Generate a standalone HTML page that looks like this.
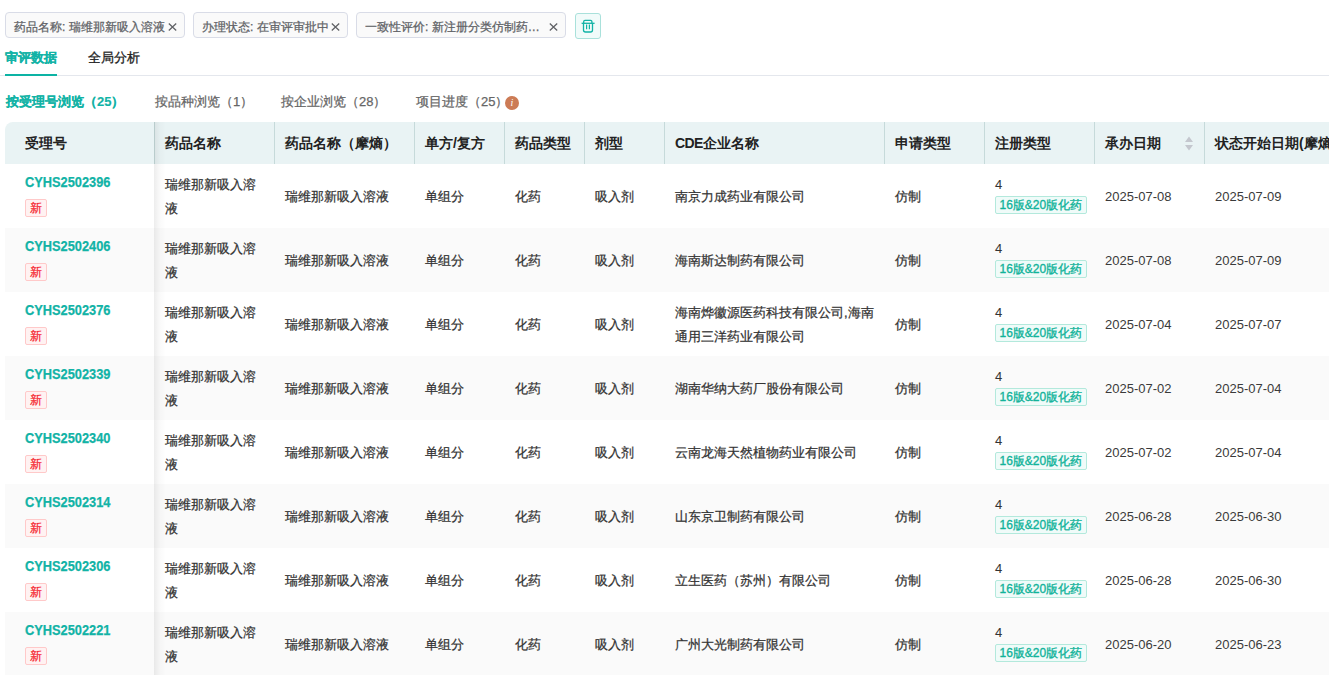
<!DOCTYPE html><html><head><meta charset="utf-8"><style>html,body{margin:0;padding:0;background:#fff;width:1329px;height:675px;overflow:hidden;position:relative;font-family:"Liberation Sans",sans-serif;}
*{box-sizing:border-box}
.tag{position:absolute;top:12px;height:26px;border:1px solid #d9dce7;border-radius:4px;background:#fafafa;color:#606266;font-size:12px;line-height:24px;padding:0 0 0 8px;white-space:nowrap}
.tag .tt{display:inline-block;vertical-align:top;position:relative;top:2px;letter-spacing:0px}
.tag .ell{width:176px;overflow:hidden;text-overflow:ellipsis}
.tag .x{position:absolute;right:7px;top:10px;width:9px;height:8px}
.trash{position:absolute;left:575px;top:13px;width:26px;height:26px;border:1px solid #a9e1db;border-radius:3px;background:#f1fbfa}
.trash svg{position:absolute;left:-1px;top:-1px}
.tabline{position:absolute;left:0;top:75px;width:1329px;height:1px;background:#e4e7ed}
.tab{position:absolute;top:48px;font-size:13px;line-height:20px;color:#222;-webkit-text-stroke:0.3px #222}
.tab.act{color:#12b3a6;font-weight:bold;-webkit-text-stroke:0.15px #12b3a6}
.tabul{position:absolute;left:5px;top:74px;width:52px;height:2px;background:#0cb3a4}
.sub{position:absolute;top:92px;font-size:13px;line-height:20px;color:#666;white-space:nowrap}
.sub.act{color:#12b3a6;font-weight:bold;-webkit-text-stroke:0.15px #12b3a6}
.info{position:absolute;left:505px;top:96px;width:14px;height:14px;border-radius:50%;background:#cc7b55;color:#fff;font-size:10px;line-height:14px;text-align:center;font-style:italic;font-weight:normal;font-family:"Liberation Serif",serif}
.thead{position:absolute;left:5px;top:122px;width:1324px;height:42px;background:#e9f3f4;border-radius:8px 0 0 0}
.th{position:absolute;top:122px;height:42px;line-height:42px;padding-left:11px;font-size:14px;font-weight:bold;color:#222;white-space:nowrap;overflow:hidden}
.thd{position:absolute;top:122px;width:1px;height:42px;background:#c6dada}
.sort{position:absolute;left:1184px;top:135px;width:10px;height:16px}
.row{position:absolute;left:5px;width:1324px;height:64px;background:#fff}
.row.st{background:#fafafa}
.td{position:absolute;top:1px;height:64px;display:flex;flex-direction:column;justify-content:center;padding-left:11px;font-size:13px;line-height:24px;color:#333;white-space:nowrap}
.no{color:#12b3a6;font-weight:bold;font-size:14px;line-height:16px;margin-top:-2px;position:relative;top:-2px;transform:scaleX(0.915);transform-origin:0 0}
.new{display:inline-block;width:22px;height:18px;margin-top:7px;border:1px solid #ffc9c9;background:#fff2f2;color:#f5222d;font-size:12px;line-height:17px;text-align:center;border-radius:2px;-webkit-text-stroke:0.2px #f5222d}
.c0{padding-left:20px;align-items:flex-start}
.four{line-height:16px;font-size:13px;position:relative;top:-2px}
.ver{display:inline-block;margin-top:2px;position:relative;top:-1px;height:18px;border:1px solid #b5e8e0;background:#f0fbf9;color:#12b39a;font-size:12px;line-height:17px;padding:0 3.5px;border-radius:2px;font-weight:500;-webkit-text-stroke:0.35px #12b39a;border-color:#b3e9dc}
.td:has(.ver){align-items:flex-start}
.fixshadow{position:absolute;left:154px;top:122px;width:12px;height:560px;background:linear-gradient(to right,rgba(0,0,0,0.07),rgba(0,0,0,0.02) 50%,rgba(0,0,0,0))}

.th.f{padding-left:20px}
.sub,.td,.tag .tt{-webkit-text-stroke:0.25px currentColor}
.td.date,.four{-webkit-text-stroke:0}
.td.date{color:#3a3a3a}
</style></head><body>
<div class="tag" style="left:5px;width:180px"><span class="tt">药品名称: 瑞维那新吸入溶液</span><svg class="x" viewBox="0 0 9 8"><path d="M0.8 0.6 L8.2 7.4 M8.2 0.6 L0.8 7.4" stroke="#606266" stroke-width="1.3"/></svg></div>
<div class="tag" style="left:193px;width:155px"><span class="tt">办理状态: 在审评审批中</span><svg class="x" viewBox="0 0 9 8"><path d="M0.8 0.6 L8.2 7.4 M8.2 0.6 L0.8 7.4" stroke="#606266" stroke-width="1.3"/></svg></div>
<div class="tag" style="left:356px;width:210px"><span class="tt ell">一致性评价: 新注册分类仿制药及按照新标准进行一致性评价</span><svg class="x" viewBox="0 0 9 8"><path d="M0.8 0.6 L8.2 7.4 M8.2 0.6 L0.8 7.4" stroke="#606266" stroke-width="1.3"/></svg></div>
<div class="trash"><svg width="26" height="26" viewBox="0 0 26 26"><g fill="none" stroke="#12b3a6" stroke-width="1.3"><path d="M8.7 10.3 V8.6 Q8.7 7.3 10 7.3 H15.6 Q16.9 7.3 16.9 8.6 V10.3"/><path d="M6.6 10.3 H19.6"/><path d="M8.5 10.3 V17 Q8.5 19 10.5 19 H15.5 Q17.5 19 17.5 17 V10.3"/><path d="M11.6 11.6 V16.3 M14.4 11.6 V16.3" stroke-width="1.2"/></g></svg></div>

<div class="tabline"></div>
<div class="tab act" style="left:5px">审评数据</div><div class="tabul"></div>
<div class="tab" style="left:88px">全局分析</div>

<div class="sub act" style="left:6px">按受理号浏览（25）</div>
<div class="sub" style="left:155px">按品种浏览（1）</div>
<div class="sub" style="left:281px">按企业浏览（28）</div>
<div class="sub" style="left:416px">项目进度（25）</div>
<div class="info">i</div>

<div class="thead"></div>
<div class="th f" style="left:5px;width:149px">受理号</div>
<div class="th" style="left:154px;width:120px">药品名称</div>
<div class="thd" style="left:154px"></div>
<div class="th" style="left:274px;width:140px">药品名称（摩熵）</div>
<div class="thd" style="left:274px"></div>
<div class="th" style="left:414px;width:90px">单方/复方</div>
<div class="thd" style="left:414px"></div>
<div class="th" style="left:504px;width:80px">药品类型</div>
<div class="thd" style="left:504px"></div>
<div class="th" style="left:584px;width:80px">剂型</div>
<div class="thd" style="left:584px"></div>
<div class="th" style="left:664px;width:220px"><span style='letter-spacing:-0.6px'>CDE</span>企业名称</div>
<div class="thd" style="left:664px"></div>
<div class="th" style="left:884px;width:100px">申请类型</div>
<div class="thd" style="left:884px"></div>
<div class="th" style="left:984px;width:110px">注册类型</div>
<div class="thd" style="left:984px"></div>
<div class="th" style="left:1094px;width:110px">承办日期</div>
<div class="thd" style="left:1094px"></div>
<div class="th" style="left:1204px;width:216px">状态开始日期(摩熵)</div>
<div class="thd" style="left:1204px"></div>
<div class="sort"><svg width="10" height="16" viewBox="0 0 10 16"><path d="M1 7 L5 1.5 L9 7Z M1 10 L5 15.5 L9 10Z" fill="#c4c7ce"/></svg></div>
<div class="row" style="top:164px">
<div class="td c0" style="left:0px;width:149px"><div class="no">CYHS2502396</div><div class="new">新</div></div>
<div class="td" style="left:149px;width:120px">瑞维那新吸入溶<br>液</div>
<div class="td" style="left:269px;width:140px">瑞维那新吸入溶液</div>
<div class="td" style="left:409px;width:90px">单组分</div>
<div class="td" style="left:499px;width:80px">化药</div>
<div class="td" style="left:579px;width:80px">吸入剂</div>
<div class="td" style="left:659px;width:220px">南京力成药业有限公司</div>
<div class="td" style="left:879px;width:100px">仿制</div>
<div class="td cn" style="left:979px;width:110px"><div class="four">4</div><div class="ver">16版&amp;20版化药</div></div>
<div class="td date" style="left:1089px;width:110px">2025-07-08</div>
<div class="td date" style="left:1199px;width:216px">2025-07-09</div>
</div>
<div class="row st" style="top:228px">
<div class="td c0" style="left:0px;width:149px"><div class="no">CYHS2502406</div><div class="new">新</div></div>
<div class="td" style="left:149px;width:120px">瑞维那新吸入溶<br>液</div>
<div class="td" style="left:269px;width:140px">瑞维那新吸入溶液</div>
<div class="td" style="left:409px;width:90px">单组分</div>
<div class="td" style="left:499px;width:80px">化药</div>
<div class="td" style="left:579px;width:80px">吸入剂</div>
<div class="td" style="left:659px;width:220px">海南斯达制药有限公司</div>
<div class="td" style="left:879px;width:100px">仿制</div>
<div class="td cn" style="left:979px;width:110px"><div class="four">4</div><div class="ver">16版&amp;20版化药</div></div>
<div class="td date" style="left:1089px;width:110px">2025-07-08</div>
<div class="td date" style="left:1199px;width:216px">2025-07-09</div>
</div>
<div class="row" style="top:292px">
<div class="td c0" style="left:0px;width:149px"><div class="no">CYHS2502376</div><div class="new">新</div></div>
<div class="td" style="left:149px;width:120px">瑞维那新吸入溶<br>液</div>
<div class="td" style="left:269px;width:140px">瑞维那新吸入溶液</div>
<div class="td" style="left:409px;width:90px">单组分</div>
<div class="td" style="left:499px;width:80px">化药</div>
<div class="td" style="left:579px;width:80px">吸入剂</div>
<div class="td" style="left:659px;width:220px">海南烨徽源医药科技有限公司,海南<br>通用三洋药业有限公司</div>
<div class="td" style="left:879px;width:100px">仿制</div>
<div class="td cn" style="left:979px;width:110px"><div class="four">4</div><div class="ver">16版&amp;20版化药</div></div>
<div class="td date" style="left:1089px;width:110px">2025-07-04</div>
<div class="td date" style="left:1199px;width:216px">2025-07-07</div>
</div>
<div class="row st" style="top:356px">
<div class="td c0" style="left:0px;width:149px"><div class="no">CYHS2502339</div><div class="new">新</div></div>
<div class="td" style="left:149px;width:120px">瑞维那新吸入溶<br>液</div>
<div class="td" style="left:269px;width:140px">瑞维那新吸入溶液</div>
<div class="td" style="left:409px;width:90px">单组分</div>
<div class="td" style="left:499px;width:80px">化药</div>
<div class="td" style="left:579px;width:80px">吸入剂</div>
<div class="td" style="left:659px;width:220px">湖南华纳大药厂股份有限公司</div>
<div class="td" style="left:879px;width:100px">仿制</div>
<div class="td cn" style="left:979px;width:110px"><div class="four">4</div><div class="ver">16版&amp;20版化药</div></div>
<div class="td date" style="left:1089px;width:110px">2025-07-02</div>
<div class="td date" style="left:1199px;width:216px">2025-07-04</div>
</div>
<div class="row" style="top:420px">
<div class="td c0" style="left:0px;width:149px"><div class="no">CYHS2502340</div><div class="new">新</div></div>
<div class="td" style="left:149px;width:120px">瑞维那新吸入溶<br>液</div>
<div class="td" style="left:269px;width:140px">瑞维那新吸入溶液</div>
<div class="td" style="left:409px;width:90px">单组分</div>
<div class="td" style="left:499px;width:80px">化药</div>
<div class="td" style="left:579px;width:80px">吸入剂</div>
<div class="td" style="left:659px;width:220px">云南龙海天然植物药业有限公司</div>
<div class="td" style="left:879px;width:100px">仿制</div>
<div class="td cn" style="left:979px;width:110px"><div class="four">4</div><div class="ver">16版&amp;20版化药</div></div>
<div class="td date" style="left:1089px;width:110px">2025-07-02</div>
<div class="td date" style="left:1199px;width:216px">2025-07-04</div>
</div>
<div class="row st" style="top:484px">
<div class="td c0" style="left:0px;width:149px"><div class="no">CYHS2502314</div><div class="new">新</div></div>
<div class="td" style="left:149px;width:120px">瑞维那新吸入溶<br>液</div>
<div class="td" style="left:269px;width:140px">瑞维那新吸入溶液</div>
<div class="td" style="left:409px;width:90px">单组分</div>
<div class="td" style="left:499px;width:80px">化药</div>
<div class="td" style="left:579px;width:80px">吸入剂</div>
<div class="td" style="left:659px;width:220px">山东京卫制药有限公司</div>
<div class="td" style="left:879px;width:100px">仿制</div>
<div class="td cn" style="left:979px;width:110px"><div class="four">4</div><div class="ver">16版&amp;20版化药</div></div>
<div class="td date" style="left:1089px;width:110px">2025-06-28</div>
<div class="td date" style="left:1199px;width:216px">2025-06-30</div>
</div>
<div class="row" style="top:548px">
<div class="td c0" style="left:0px;width:149px"><div class="no">CYHS2502306</div><div class="new">新</div></div>
<div class="td" style="left:149px;width:120px">瑞维那新吸入溶<br>液</div>
<div class="td" style="left:269px;width:140px">瑞维那新吸入溶液</div>
<div class="td" style="left:409px;width:90px">单组分</div>
<div class="td" style="left:499px;width:80px">化药</div>
<div class="td" style="left:579px;width:80px">吸入剂</div>
<div class="td" style="left:659px;width:220px">立生医药（苏州）有限公司</div>
<div class="td" style="left:879px;width:100px">仿制</div>
<div class="td cn" style="left:979px;width:110px"><div class="four">4</div><div class="ver">16版&amp;20版化药</div></div>
<div class="td date" style="left:1089px;width:110px">2025-06-28</div>
<div class="td date" style="left:1199px;width:216px">2025-06-30</div>
</div>
<div class="row st" style="top:612px">
<div class="td c0" style="left:0px;width:149px"><div class="no">CYHS2502221</div><div class="new">新</div></div>
<div class="td" style="left:149px;width:120px">瑞维那新吸入溶<br>液</div>
<div class="td" style="left:269px;width:140px">瑞维那新吸入溶液</div>
<div class="td" style="left:409px;width:90px">单组分</div>
<div class="td" style="left:499px;width:80px">化药</div>
<div class="td" style="left:579px;width:80px">吸入剂</div>
<div class="td" style="left:659px;width:220px">广州大光制药有限公司</div>
<div class="td" style="left:879px;width:100px">仿制</div>
<div class="td cn" style="left:979px;width:110px"><div class="four">4</div><div class="ver">16版&amp;20版化药</div></div>
<div class="td date" style="left:1089px;width:110px">2025-06-20</div>
<div class="td date" style="left:1199px;width:216px">2025-06-23</div>
</div>
<div class="fixshadow"></div>
</body></html>
